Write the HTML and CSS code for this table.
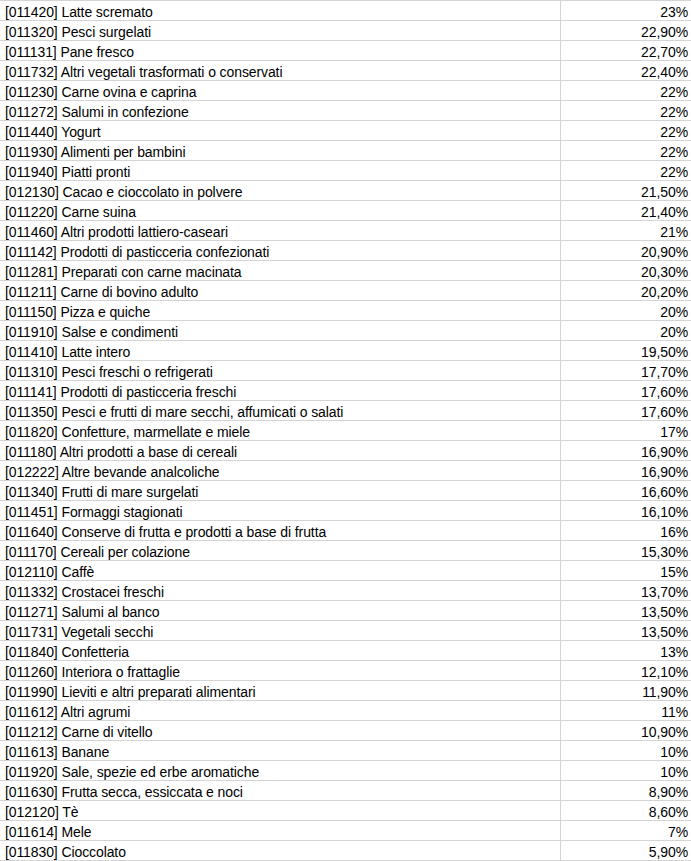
FILE: index.html
```html
<!DOCTYPE html>
<html lang="it">
<head>
<meta charset="utf-8">
<link rel="stylesheet" href="styles.css">
</head>
<body>
<table class="sheet">
<tbody>
<tr><td class="label">[011420] Latte scremato</td><td class="val">23%</td></tr>
<tr><td class="label">[011320] Pesci surgelati</td><td class="val">22,90%</td></tr>
<tr><td class="label">[011131] Pane fresco</td><td class="val">22,70%</td></tr>
<tr><td class="label">[011732] Altri vegetali trasformati o conservati</td><td class="val">22,40%</td></tr>
<tr><td class="label">[011230] Carne ovina e caprina</td><td class="val">22%</td></tr>
<tr><td class="label">[011272] Salumi in confezione</td><td class="val">22%</td></tr>
<tr><td class="label">[011440] Yogurt</td><td class="val">22%</td></tr>
<tr><td class="label">[011930] Alimenti per bambini</td><td class="val">22%</td></tr>
<tr><td class="label">[011940] Piatti pronti</td><td class="val">22%</td></tr>
<tr><td class="label">[012130] Cacao e cioccolato in polvere</td><td class="val">21,50%</td></tr>
<tr><td class="label">[011220] Carne suina</td><td class="val">21,40%</td></tr>
<tr><td class="label">[011460] Altri prodotti lattiero-caseari</td><td class="val">21%</td></tr>
<tr><td class="label">[011142] Prodotti di pasticceria confezionati</td><td class="val">20,90%</td></tr>
<tr><td class="label">[011281] Preparati con carne macinata</td><td class="val">20,30%</td></tr>
<tr><td class="label">[011211] Carne di bovino adulto</td><td class="val">20,20%</td></tr>
<tr><td class="label">[011150] Pizza e quiche</td><td class="val">20%</td></tr>
<tr><td class="label">[011910] Salse e condimenti</td><td class="val">20%</td></tr>
<tr><td class="label">[011410] Latte intero</td><td class="val">19,50%</td></tr>
<tr><td class="label">[011310] Pesci freschi o refrigerati</td><td class="val">17,70%</td></tr>
<tr><td class="label">[011141] Prodotti di pasticceria freschi</td><td class="val">17,60%</td></tr>
<tr><td class="label">[011350] Pesci e frutti di mare secchi, affumicati o salati</td><td class="val">17,60%</td></tr>
<tr><td class="label">[011820] Confetture, marmellate e miele</td><td class="val">17%</td></tr>
<tr><td class="label">[011180] Altri prodotti a base di cereali</td><td class="val">16,90%</td></tr>
<tr><td class="label">[012222] Altre bevande analcoliche</td><td class="val">16,90%</td></tr>
<tr><td class="label">[011340] Frutti di mare surgelati</td><td class="val">16,60%</td></tr>
<tr><td class="label">[011451] Formaggi stagionati</td><td class="val">16,10%</td></tr>
<tr><td class="label">[011640] Conserve di frutta e prodotti a base di frutta</td><td class="val">16%</td></tr>
<tr><td class="label">[011170] Cereali per colazione</td><td class="val">15,30%</td></tr>
<tr><td class="label">[012110] Caffè</td><td class="val">15%</td></tr>
<tr><td class="label">[011332] Crostacei freschi</td><td class="val">13,70%</td></tr>
<tr><td class="label">[011271] Salumi al banco</td><td class="val">13,50%</td></tr>
<tr><td class="label">[011731] Vegetali secchi</td><td class="val">13,50%</td></tr>
<tr><td class="label">[011840] Confetteria</td><td class="val">13%</td></tr>
<tr><td class="label">[011260] Interiora o frattaglie</td><td class="val">12,10%</td></tr>
<tr><td class="label">[011990] Lieviti e altri preparati alimentari</td><td class="val">11,90%</td></tr>
<tr><td class="label">[011612] Altri agrumi</td><td class="val">11%</td></tr>
<tr><td class="label">[011212] Carne di vitello</td><td class="val">10,90%</td></tr>
<tr><td class="label">[011613] Banane</td><td class="val">10%</td></tr>
<tr><td class="label">[011920] Sale, spezie ed erbe aromatiche</td><td class="val">10%</td></tr>
<tr><td class="label">[011630] Frutta secca, essiccata e noci</td><td class="val">8,90%</td></tr>
<tr><td class="label">[012120] Tè</td><td class="val">8,60%</td></tr>
<tr><td class="label">[011614] Mele</td><td class="val">7%</td></tr>
<tr><td class="label">[011830] Cioccolato</td><td class="val">5,90%</td></tr>
</tbody>
</table>
</body>
</html>
```

FILE: styles.css
```css
html, body {
  margin: 0;
  padding: 0;
  background: #ffffff;
}

.sheet {
  border-collapse: collapse;
  table-layout: fixed;
  width: 692px;
  margin-left: -1px;
  font-family: "Liberation Sans", Arial, sans-serif;
  font-size: 14px;
  letter-spacing: -0.1px;
  color: #000000;
}

.sheet td {
  height: 19px;
  padding: 3px 3px 0 4px;
  border: 1px solid #d4d4d4;
  line-height: 16px;
  white-space: nowrap;
  overflow: hidden;
  vertical-align: top;
  box-sizing: border-box;
}

.sheet .label {
  width: 561px;
  padding-left: 5px;
}

.sheet .val {
  text-align: right;
  padding-right: 3px;
  border-right: none;
}
```
